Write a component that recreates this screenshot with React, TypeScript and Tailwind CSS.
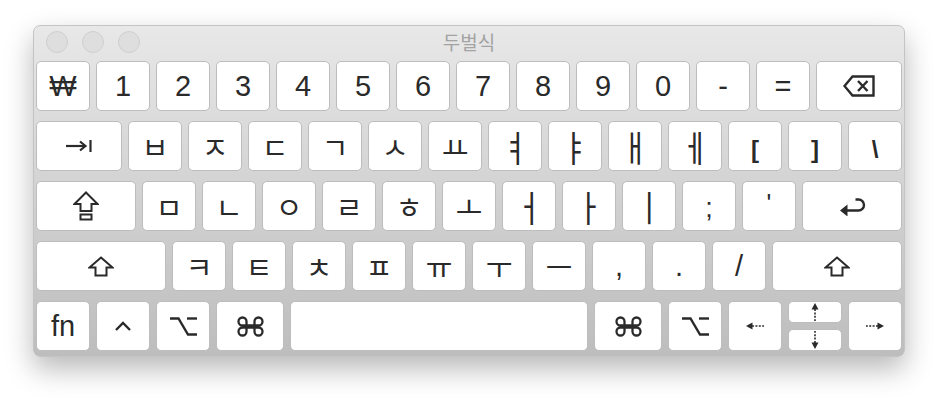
import { ReactNode } from "react";

const KEY =
  "flex h-[50px] items-center justify-center rounded-[5px] border border-[#bdbdbd] bg-white text-[#2a2a2a]";

const SANS = "font-['Liberation_Sans',Arial,sans-serif]";
const KR = "font-['Noto_Sans_CJK_KR','Noto_Sans',sans-serif]";

function Key({ children, className = "w-[54px]" }: { children?: ReactNode; className?: string }) {
  return <div className={`${KEY} ${className}`}>{children}</div>;
}

const Sym = ({ c, size = "text-[29px]" }: { c: string; size?: string }) => (
  <Key>
    <span className={`${SANS} ${size} leading-none`}>{c}</span>
  </Key>
);

// vowels drawn tall in the reference font, stretch them a little
const TALL = ["ㅕ", "ㅑ", "ㅐ", "ㅔ", "ㅓ", "ㅏ", "ㅣ"];

const Jamo = ({ c }: { c: string }) => (
  <Key>
    <span className={`${KR} text-[29px] leading-none ${TALL.includes(c) ? "scale-y-[1.25]" : ""}`}>
      {c}
    </span>
  </Key>
);

const Backspace = () => (
  <svg width="32" height="22" viewBox="0 0 32 22" fill="none" stroke="#2a2a2a" strokeWidth="2.4">
    <path d="M1.5 11 L9.5 1.5 H30.5 V20.5 H9.5 Z" strokeLinejoin="miter" />
    <path d="M15 6 L24.5 16 M24.5 6 L15 16" />
  </svg>
);

const Tab = () => (
  <svg width="27" height="12" viewBox="0 0 27 12" fill="none" stroke="#2a2a2a" strokeWidth="2.2">
    <path d="M0 6 H19" />
    <path d="M14 1.5 L19.5 6 L14 10.5" />
    <path d="M24.5 0 V12" />
  </svg>
);

const Caps = () => (
  <svg width="26" height="30" viewBox="0 0 26 30" fill="none" stroke="#2a2a2a" strokeWidth="2">
    <path d="M13 1.5 L24.5 13 H18.5 V20 H7.5 V13 H1.5 Z" strokeLinejoin="miter" />
    <rect x="7.5" y="23.5" width="11" height="5" />
  </svg>
);

const Shift = () => (
  <svg width="26" height="21" viewBox="0 0 26 21" fill="none" stroke="#2a2a2a" strokeWidth="2">
    <path d="M13 1.5 L24.5 11.5 H18.5 V19.5 H7.5 V11.5 H1.5 Z" strokeLinejoin="miter" />
  </svg>
);

const Return = () => (
  <svg width="27" height="20" viewBox="0 0 27 20" fill="none" stroke="#2a2a2a" strokeWidth="2.4">
    <path d="M6 14.5 H19.5 A5.5 5.5 0 0 0 19.5 3.5 H16.5" />
    <path d="M1 14.5 L8.5 8.5 V20.5 Z" fill="#2a2a2a" stroke="none" />
  </svg>
);

const Caret = () => (
  <svg width="16" height="10" viewBox="0 0 16 10" fill="none" stroke="#2a2a2a" strokeWidth="2.4">
    <path d="M1 9 L8 2 L15 9" />
  </svg>
);

const Option = () => (
  <svg width="29" height="21" viewBox="0 0 29 21" fill="none" stroke="#2a2a2a" strokeWidth="2.4">
    <path d="M1 2.5 H9.5 L19 18.5 H28" />
    <path d="M18 2.5 H28" />
  </svg>
);

const Command = () => (
  <svg width="27" height="23" viewBox="0 0 27 23" fill="none" stroke="#2a2a2a" strokeWidth="2.3">
    <path d="M17.5 6.5 V16.5 A4 4 0 1 0 21.5 12.5 H5.5 A4 4 0 1 0 9.5 16.5 V6.5 A4 4 0 1 0 5.5 10.5 H21.5 A4 4 0 1 0 17.5 6.5" />
  </svg>
);

const Arrow = ({ rotate = "" }: { rotate?: string }) => (
  <svg width="18" height="8" viewBox="0 0 18 8" className={rotate}>
    <path d="M0 4 L6.5 0.5 V7.5 Z" fill="#2a2a2a" />
    <path d="M6 4 H18" stroke="#2a2a2a" strokeWidth="1.6" strokeDasharray="2 1.4" />
  </svg>
);

const Light = () => (
  <div className="h-[22px] w-[22px] rounded-full border border-[#cfcfcf] bg-[#dedede]" />
);

const HalfKey = ({ children }: { children: ReactNode }) => (
  <div className="flex h-[22px] items-center justify-center rounded-[5px] border border-[#bdbdbd] bg-white">
    {children}
  </div>
);

export default function App() {
  return (
    <div className="flex h-[398px] w-[938px] justify-center bg-white pt-[25px]">
      <div className="h-[332px] w-[872px] rounded-[7px] border border-[#c4c4c4] bg-linear-to-b from-[#e8e8e8] to-[#bdbdbd] px-[2px] shadow-[0_12px_28px_rgba(0,0,0,0.28)]">
        <div className="grid h-[32px] grid-cols-[1fr_auto_1fr] items-center">
          <div className="flex gap-[14px] pl-[10px]">
            <Light />
            <Light />
            <Light />
          </div>
          <span className={`${KR} text-[19px] text-[#a3a3a3]`}>두벌식</span>
          <div />
        </div>

        <div className="flex flex-col gap-[10px] pt-[3px]">
          <div className="flex gap-[6px]">
            <Sym c="₩" />
            {["1", "2", "3", "4", "5", "6", "7", "8", "9", "0", "-", "="].map((c) => (
              <Sym key={c} c={c} />
            ))}
            <Key className="flex-1">
              <Backspace />
            </Key>
          </div>

          <div className="flex gap-[6px]">
            <Key className="flex-1">
              <Tab />
            </Key>
            {["ㅂ", "ㅈ", "ㄷ", "ㄱ", "ㅅ", "ㅛ", "ㅕ", "ㅑ", "ㅐ", "ㅔ"].map((c) => (
              <Jamo key={c} c={c} />
            ))}
            {["[", "]", "\\"].map((c) => (
              <Sym key={c} c={c} size="text-[24px] font-bold pt-[7px]" />
            ))}
          </div>

          <div className="flex gap-[6px]">
            <Key className="flex-1">
              <Caps />
            </Key>
            {["ㅁ", "ㄴ", "ㅇ", "ㄹ", "ㅎ", "ㅗ", "ㅓ", "ㅏ", "ㅣ"].map((c) => (
              <Jamo key={c} c={c} />
            ))}
            <Sym c=";" size="text-[27px] pt-[4px]" />
            <Sym c="'" size="text-[25px] pb-[6px]" />
            <Key className="flex-1">
              <Return />
            </Key>
          </div>

          <div className="flex gap-[6px]">
            <Key className="flex-1">
              <Shift />
            </Key>
            {["ㅋ", "ㅌ", "ㅊ", "ㅍ", "ㅠ", "ㅜ", "ㅡ"].map((c) => (
              <Jamo key={c} c={c} />
            ))}
            <Sym c="," />
            <Sym c="." />
            <Sym c="/" />
            <Key className="flex-1">
              <Shift />
            </Key>
          </div>

          <div className="flex gap-[6px]">
            <Key>
              <span className={`${SANS} text-[29px] leading-none`}>fn</span>
            </Key>
            <Key>
              <Caret />
            </Key>
            <Key>
              <Option />
            </Key>
            <Key className="w-[68px]">
              <Command />
            </Key>
            <Key className="flex-1" />
            <Key className="w-[68px]">
              <Command />
            </Key>
            <Key>
              <Option />
            </Key>
            <Key>
              <Arrow />
            </Key>
            <div className="flex w-[54px] flex-col gap-[6px]">
              <HalfKey>
                <Arrow rotate="rotate-90" />
              </HalfKey>
              <HalfKey>
                <Arrow rotate="-rotate-90" />
              </HalfKey>
            </div>
            <Key>
              <Arrow rotate="rotate-180" />
            </Key>
          </div>
        </div>
      </div>
    </div>
  );
}
